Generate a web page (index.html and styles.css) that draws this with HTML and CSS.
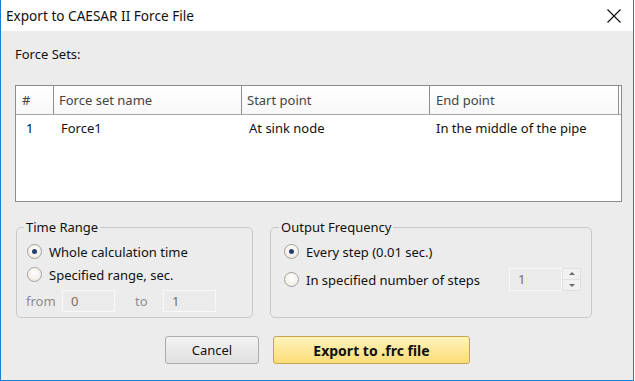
FILE: index.html
```html
<!DOCTYPE html>
<html>
<head>
<meta charset="utf-8">
<link rel="stylesheet" href="styles.css">
</head>
<body>
<div class="window">
  <div class="titlebar">
    <span class="title">Export to CAESAR II Force File</span>
    <svg class="close" width="16" height="16" viewBox="0 0 16 16"><path d="M1.5 1.5 L14.5 14.5 M14.5 1.5 L1.5 14.5" stroke="#111" stroke-width="1.2" fill="none"/></svg>
  </div>
  <div class="content">
    <div class="section-label">Force Sets:</div>
    <div class="table">
      <div class="row head">
        <div class="cell c-num">#</div>
        <div class="cell c-name">Force set name</div>
        <div class="cell c-start">Start point</div>
        <div class="cell c-end">End point</div>
      </div>
      <div class="row data">
        <div class="cell c-num">1</div>
        <div class="cell c-name">Force1</div>
        <div class="cell c-start">At sink node</div>
        <div class="cell c-end">In the middle of the pipe</div>
      </div>
    </div>
    <div class="groups">
      <fieldset class="group time">
        <legend>Time Range</legend>
        <div class="opt"><span class="radio on"></span>Whole calculation time</div>
        <div class="opt"><span class="radio"></span>Specified range, sec.</div>
        <div class="range">
          <span class="dim from">from</span><span class="field">0</span>
          <span class="dim to">to</span><span class="field">1</span>
        </div>
      </fieldset>
      <fieldset class="group freq">
        <legend>Output Frequency</legend>
        <div class="opt"><span class="radio on"></span>Every step (0.01 sec.)</div>
        <div class="opt steps"><span class="radio"></span><span class="grow">In specified number of steps</span>
          <span class="spin"><span class="field sfield">1</span><span class="arrows"><span class="arr up"></span><span class="arr down"></span></span></span>
        </div>
      </fieldset>
    </div>
    <div class="buttons">
      <div class="btn cancel">Cancel</div>
      <div class="btn export">Export to .frc file</div>
    </div>
  </div>
</div>
</body>
</html>
```
FILE: styles.css
```css
html, body { margin: 0; padding: 0; background: #fff; }
body { font-family: "Noto Sans", "Open Sans", sans-serif; font-size: 13px; color: #111; }
.window {
  width: 632px; height: 380px;
  border: 1px solid #1b7fd1; border-top: none;
  background: #ececec;
  display: flex; flex-direction: column;
}
.titlebar {
  height: 31px; background: #fff;
  display: flex; align-items: center; justify-content: space-between;
  padding: 0 11px 0 5px;
}
.title { font-size: 13.6px; color: #111; }
.close { margin-top: 1px; }
.content { flex: 1; padding: 14px 11px 0 14px; display: flex; flex-direction: column; }
.section-label { line-height: 18px; margin-bottom: 22px; }
.table {
  height: 115px; background: #fff;
  border: 1px solid #8c8c8c;
}
.row { display: flex; }
.row.head { height: 28px; align-items: center; border-bottom: 1px solid #a6a6a6; color: #444; background: linear-gradient(#fff, #f7f7f7); }
.row.data { height: 26px; align-items: center; }
.cell { box-sizing: border-box; white-space: nowrap; }
.c-num { width: 38px; padding-left: 6px; }
.c-name { width: 188px; padding-left: 5px; }
.c-start { width: 188px; padding-left: 5px; }
.c-end { flex: 1; padding-left: 6px; }
.head .cell { height: 28px; line-height: 28px; border-right: 1px solid #8e8e8e; }
.head .c-end { margin-right: 2px; }
.data .c-num { padding-left: 10px; }
.data .c-name { padding-left: 7px; }
.data .c-start { padding-left: 7px; }
.data .c-end { padding-left: 6px; }

.groups { display: flex; gap: 17px; margin-top: 18px; padding-left: 1px; }
.group {
  margin: 0; border: 1px solid #c9c9c9; border-radius: 5px;
  box-sizing: border-box; height: 98px;
}
.group legend { padding: 0 2px; line-height: 14px; }
.time legend { margin-left: -3px; }
.freq legend { margin-left: -5px; }
.time { width: 237px; padding: 6px 6px 0 10px; }
.freq { width: 322px; padding: 6px 6px 0 13px; }
.opt { display: flex; align-items: center; height: 23px; white-space: nowrap; }
.freq .opt.steps { height: 33px; margin-top: 0; }
.radio {
  width: 15px; height: 15px; border-radius: 50%; box-sizing: border-box;
  border: 1px solid #a2a2a2;
  background: radial-gradient(circle at 50% 40%, #fff 0%, #f6f2ec 55%, #e4ddd2 100%);
  margin-right: 7px; display: inline-flex; align-items: center; justify-content: center;
  flex: none;
}
.radio.on::after { content: ""; width: 5px; height: 5px; border-radius: 50%; background: #24406e; }
.range { display: flex; align-items: center; margin-top: 3px; height: 24px; }
.dim { color: #8c8c8c; }
.from { width: 36px; margin-left: -1px; }
.to { width: 28px; margin-left: 20px; }
.field {
  box-sizing: border-box; width: 53px; height: 22px; line-height: 20px;
  border: 1px solid #f8f8f8; background: #ebebeb; color: #707070; padding-left: 8px;
}
.grow { flex: 1; }
.spin { display: flex; margin-right: 4px; }
.sfield { height: 23px; }
.arrows { display: flex; flex-direction: column; width: 19px; height: 23px; }
.arr { flex: 1; border: 1px solid #e0e0e0; background: #f1f1f1; position: relative; }
.arr.up { border-bottom: none; }
.arr::after { content: ""; position: absolute; left: 6px; top: 3px; border-left: 3px solid transparent; border-right: 3px solid transparent; }
.arr.up::after { border-bottom: 3px solid #6a6a6a; }
.arr.down::after { border-top: 3px solid #6a6a6a; top: 4px; }

.buttons { display: flex; justify-content: center; gap: 14px; margin-top: 18px; padding-right: 2px; }
.btn {
  height: 28px; box-sizing: border-box; display: flex; align-items: center; justify-content: center;
  border-radius: 3px;
}
.cancel { width: 94px; border: 1px solid #adadad; background: linear-gradient(#f2f2f2, #e0e0e0); }
.export {
  width: 197px; border: 1px solid #c6a552; font-weight: bold; font-size: 14px;
  background: linear-gradient(#fff3bd, #fbdd77);
}
```
